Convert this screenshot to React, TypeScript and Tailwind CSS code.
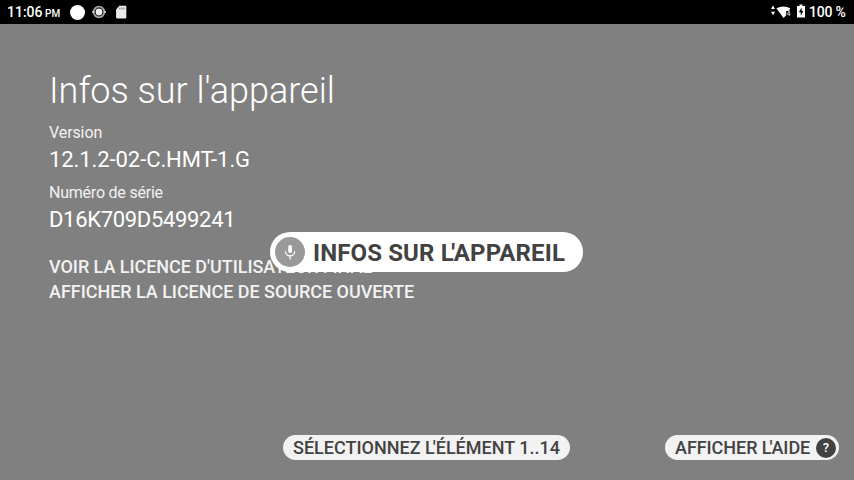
import React from "react";

function StatusBar() {
  return (
    <header className="flex h-6 shrink-0 items-center justify-between bg-black pl-[7px] pr-2 text-white">
      <div className="flex h-6 items-center">
        <span className="w-[38px] whitespace-nowrap text-[14px] font-medium leading-6">11:06</span>
        <span className="w-[25px] whitespace-nowrap pt-[3px] text-[10px] font-medium leading-5">PM</span>
        <span className="h-[15px] w-[15px] rounded-full bg-white" />
        <svg className="ml-[7px]" width="14" height="14" viewBox="0 0 14 14" fill="none">
          <circle cx="7" cy="7" r="5.3" stroke="#a5a5a5" strokeWidth="1.8" />
          <circle cx="7" cy="7" r="3.4" fill="#eee" />
          <path d="M0 7h2.2M11.8 7H14" stroke="#ddd" strokeWidth="1.5" />
        </svg>
        <svg className="ml-[9px]" width="12" height="14" viewBox="0 0 12 14">
          <path d="M4.3.8H10.300q1 0 1 1v10.600q0 1-1 1H2.100q-1 0-1-1V4.500Z" fill="#ebebeb" />
          <path d="M4.8 2.500v2M6.900 2.500v2M9 2.500v2" stroke="#777" strokeWidth="1" />
        </svg>
      </div>
      <div className="flex h-6 items-center">
        <svg width="22" height="16" viewBox="0 0 22 16" fill="#fff">
          <path d="M1 5 3 1.600 5 5ZM1 7.800h4L3 11.200Z" />
          <path d="M6.400 4.200Q13.500 .6 20.400 4.200L18.500 7H16.200v4.200L13.500 14Z" />
          <path d="M19.300 6.500 17.300 10.200H20.600M19.300 6.500V12" fill="none" stroke="#bbb" strokeWidth="1" />
        </svg>
        <svg className="mb-[3px] ml-[5px]" width="8" height="14" viewBox="0 0 8 14">
          <path d="M2.500.500h3V2H8v11.500H0V2h2.500Z" fill="#fff" />
          <path d="M4.700 3.500 1.800 8.200h1.900v3.500l2.600-4.600H4.700Z" fill="#000" />
        </svg>
        <span className="ml-1 w-[37px] whitespace-nowrap text-[14px] font-medium leading-6 tracking-[-0.2px]">100 %</span>
      </div>
    </header>
  );
}

function VoiceBubble() {
  return (
    <div className="absolute left-[270px] top-[232px] flex h-10 w-[313px] items-center rounded-full bg-white pl-[5px]">
      <span className="flex h-[30px] w-[30px] shrink-0 items-center justify-center rounded-full bg-[#999]">
        <svg width="12" height="16" viewBox="0 0 12 16" fill="none">
          <rect x="4.200" y="1" width="3.800" height="8" rx="1.900" fill="#fff" />
          <path d="M1.500 7.300a4.600 4.600 0 0 0 9.200 0M6.100 12v3.500" stroke="#fff" strokeWidth="1.300" />
        </svg>
      </span>
      <span className="ml-2 whitespace-nowrap pt-[2px] text-[24px] font-bold leading-[38px] tracking-[0.13px] text-[#424242]">
        INFOS SUR <span className="tracking-[-2.4px]">L</span>'APPAREIL
      </span>
    </div>
  );
}

export default function App() {
  return (
    <div className="relative flex h-[480px] w-[854px] flex-col overflow-hidden bg-[#808080] font-['Roboto',sans-serif] text-white">
      <StatusBar />
      <main className="flex flex-1 flex-col whitespace-nowrap pl-[49px] pt-[45px]">
        <h1 className="text-[36px] font-light leading-[44px]">Infos sur l'appareil</h1>
        <p className="mt-[10px] text-[16px] leading-5 tracking-[-0.1px] text-[#f2f2f2]">Version</p>
        <p className="mt-[3px] text-[22px] leading-7 tracking-[-0.08px]">12.1.2-02-C.HMT-1.G</p>
        <p className="mt-[9px] text-[16px] leading-5 tracking-[-0.22px] text-[#f2f2f2]">Numéro de série</p>
        <p className="mt-[3px] text-[22px] leading-7 tracking-[-0.32px]">D16K709D5499241</p>
        <div className="mt-[20px] flex flex-col text-[18px] font-medium leading-[25px] tracking-[-0.04px] text-[#f2f2f2]">
          <span>VOIR LA LICENCE D'UTILISATEUR FINAL</span>
          <span>AFFICHER LA LICENCE DE SOURCE OUVERTE</span>
        </div>
      </main>
      <footer className="mb-5 flex h-[25px] shrink-0 justify-between pl-[283px] pr-[15px] text-[18px] font-medium leading-[25px] text-[#424242]">
        <div className="w-[287px] whitespace-nowrap rounded-full bg-[#f2f2f2] pl-[10px]">
          SÉLECTIONNEZ <span className="tracking-[-2px]">L</span>'ÉLÉMENT 1..14
        </div>
        <div className="flex w-[174px] items-center justify-between whitespace-nowrap rounded-full bg-[#f2f2f2] pl-[10px] pr-[3px]">
          <span className="tracking-[-0.06px]">
            AFFICHER <span className="tracking-[-2px]">L</span>'AIDE
          </span>
          <span className="flex h-5 w-5 items-center justify-center rounded-full bg-[#424242] text-[13px] leading-5 text-white">?</span>
        </div>
      </footer>
      <VoiceBubble />
    </div>
  );
}
